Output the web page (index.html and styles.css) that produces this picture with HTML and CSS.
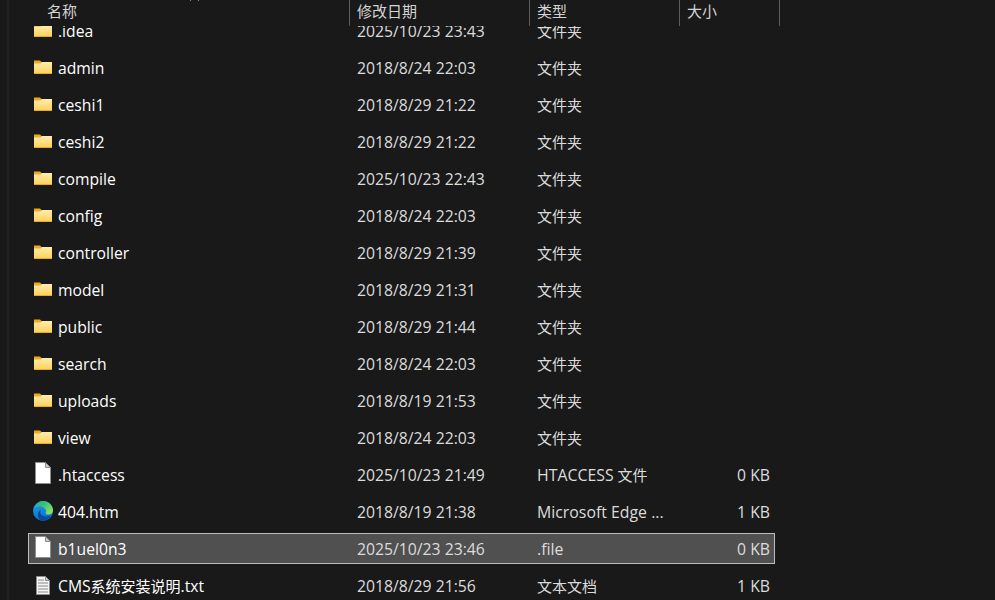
FILE: index.html
```html
<!DOCTYPE html>
<html lang="zh-CN">
<head>
<meta charset="utf-8">
<title>文件列表</title>
<link rel="stylesheet" href="styles.css">
</head>
<body>
<svg class="defs" width="0" height="0" aria-hidden="true">
  <defs>
    <linearGradient id="fg" x1="0" y1="0" x2="0" y2="1"><stop offset="0" stop-color="#ffeeb0"/><stop offset="1" stop-color="#fcd25e"/></linearGradient>
    <linearGradient id="eg" x1="0" y1="0" x2="1" y2="0.600"><stop offset="0" stop-color="#2aa8a8"/><stop offset="0.500" stop-color="#35c27a"/><stop offset="1" stop-color="#8ae05e"/></linearGradient>
    <linearGradient id="eb" x1="0" y1="0" x2="0.300" y2="1"><stop offset="0" stop-color="#1fa0e6"/><stop offset="1" stop-color="#0c6fce"/></linearGradient>
    <symbol id="folder" viewBox="0 0 20 20">
      <path d="M1 3.500h6l2 2h10V17H1z" fill="#f2a81c"/>
      <path d="M1 6.500h6.500l1.500-1.500h10v11H1z" fill="url(#fg)"/>
      <path d="M1 16h18v1H1z" fill="#eeaa22"/>
    </symbol>
    <symbol id="file" viewBox="0 0 20 24">
      <path d="M2.500 1.500h10l5 5v16h-15z" fill="#fff" stroke="#8d8d8d" stroke-width="1"/>
      <path d="M12.500 1.500v5h5z" fill="#c9c9c9" stroke="#8d8d8d" stroke-width="1"/>
    </symbol>
    <symbol id="txt" viewBox="0 0 20 21">
      <path d="M3.500 1.500h9l4 4v14h-13z" fill="#f4f4f4" stroke="#8d8d8d" stroke-width="1"/>
      <path d="M12.500 1.500v4h4z" fill="#c9c9c9" stroke="#8d8d8d" stroke-width="1"/>
      <path d="M5 5h6M5 8h10M5 11h10M5 14h10M5 17h10" stroke="#8a8a8a" stroke-width="1.200" fill="none"/>
    </symbol>
    <symbol id="edge" viewBox="0 0 20 20">
      <circle cx="10" cy="10" r="10" fill="url(#eb)"/>
      <path d="M1.500 5.500C3.500 2 6.500 0 10 0c6 0 10 4.500 10 9.500 0 2.500-2 4-4.500 4-1.500 0-3-.5-3-1.500 1-1.500.5-4-2-5.500C7 4.500 3.500 5 1.500 7.500z" fill="url(#eg)"/>
      <path d="M17.800 14.500C16 17.500 13 19.700 10 19.900 6.800 20 4.500 17 5 13 5.300 11 6.500 9.500 8 8.800 6.800 10.500 7 13 9 14.500c2.500 1.500 6 1 8.800 0z" fill="#0b4a9a"/>
    </symbol>
  </defs>
</svg>
<div class="window">
  <div class="gutter"></div>
  <main class="pane">
    <span class="tick tick-a"></span>
    <span class="tick tick-b"></span>
    <header class="head">
      <div class="hcell hname">名称</div>
      <div class="hcell hdate">修改日期</div>
      <div class="hcell htype">类型</div>
      <div class="hcell hsize">大小</div>
    </header>
    <ul class="list">
      <li class="row"><svg class="ico ico-folder"><use href="#folder"/></svg><span class="name">.idea</span><span class="date">2025/10/23 23:43</span><span class="type">文件夹</span><span class="size"></span></li>
      <li class="row"><svg class="ico ico-folder"><use href="#folder"/></svg><span class="name">admin</span><span class="date">2018/8/24 22:03</span><span class="type">文件夹</span><span class="size"></span></li>
      <li class="row"><svg class="ico ico-folder"><use href="#folder"/></svg><span class="name">ceshi1</span><span class="date">2018/8/29 21:22</span><span class="type">文件夹</span><span class="size"></span></li>
      <li class="row"><svg class="ico ico-folder"><use href="#folder"/></svg><span class="name">ceshi2</span><span class="date">2018/8/29 21:22</span><span class="type">文件夹</span><span class="size"></span></li>
      <li class="row"><svg class="ico ico-folder"><use href="#folder"/></svg><span class="name">compile</span><span class="date">2025/10/23 22:43</span><span class="type">文件夹</span><span class="size"></span></li>
      <li class="row"><svg class="ico ico-folder"><use href="#folder"/></svg><span class="name">config</span><span class="date">2018/8/24 22:03</span><span class="type">文件夹</span><span class="size"></span></li>
      <li class="row"><svg class="ico ico-folder"><use href="#folder"/></svg><span class="name">controller</span><span class="date">2018/8/29 21:39</span><span class="type">文件夹</span><span class="size"></span></li>
      <li class="row"><svg class="ico ico-folder"><use href="#folder"/></svg><span class="name">model</span><span class="date">2018/8/29 21:31</span><span class="type">文件夹</span><span class="size"></span></li>
      <li class="row"><svg class="ico ico-folder"><use href="#folder"/></svg><span class="name">public</span><span class="date">2018/8/29 21:44</span><span class="type">文件夹</span><span class="size"></span></li>
      <li class="row"><svg class="ico ico-folder"><use href="#folder"/></svg><span class="name">search</span><span class="date">2018/8/24 22:03</span><span class="type">文件夹</span><span class="size"></span></li>
      <li class="row"><svg class="ico ico-folder"><use href="#folder"/></svg><span class="name">uploads</span><span class="date">2018/8/19 21:53</span><span class="type">文件夹</span><span class="size"></span></li>
      <li class="row"><svg class="ico ico-folder"><use href="#folder"/></svg><span class="name">view</span><span class="date">2018/8/24 22:03</span><span class="type">文件夹</span><span class="size"></span></li>
      <li class="row"><svg class="ico ico-file"><use href="#file"/></svg><span class="name">.htaccess</span><span class="date">2025/10/23 21:49</span><span class="type"><span class="latin">HTACCESS</span> 文件</span><span class="size">0 KB</span></li>
      <li class="row"><svg class="ico ico-edge"><use href="#edge"/></svg><span class="name">404.htm</span><span class="date">2018/8/19 21:38</span><span class="type"><span class="latin">Microsoft Edge ...</span></span><span class="size">1 KB</span></li>
      <li class="row selected"><svg class="ico ico-file"><use href="#file"/></svg><span class="name">b1uel0n3</span><span class="date">2025/10/23 23:46</span><span class="type"><span class="latin">.file</span></span><span class="size">0 KB</span></li>
      <li class="row"><svg class="ico ico-txt"><use href="#txt"/></svg><span class="name">CMS<span class="cjk">系统安装说明</span>.txt</span><span class="date">2018/8/29 21:56</span><span class="type">文本文档</span><span class="size">1 KB</span></li>
    </ul>
  </main>
</div>
</body>
</html>
```

FILE: styles.css
```css
* { box-sizing: border-box; }
html, body { margin: 0; padding: 0; height: 100%; }
body {
  background: #191919;
  color: #fff;
  font-family: "Open Sans", "Noto Sans CJK SC", sans-serif;
  font-size: 15px;
  overflow: hidden;
}
.defs { position: absolute; }
.window { display: flex; height: 600px; overflow: hidden; }
.gutter { width: 9px; flex: none; border-right: 2px solid #222; }
.pane { position: relative; flex: 1; min-width: 0; }
.tick { position: absolute; top: 0; width: 1px; height: 1px; background: #8a8a8a; z-index: 3; }
.tick-a { left: 181px; }
.tick-b { left: 189px; }

.head {
  position: relative;
  z-index: 2;
  display: flex;
  width: 771px;
  height: 26px;
  margin-bottom: -11px;
  background: #191919;
  color: #d4d4d4;
  font-size: 15px;
}
.hcell { padding: 0 0 0 7px; line-height: 22px; border-right: 1px solid #5d5d5d; }
.hname { width: 341px; padding-left: 38px; }
.hdate { width: 180px; }
.htype { width: 150px; }
.hsize { width: 100px; }

.list { list-style: none; margin: 0; padding: 0; display: flex; flex-direction: column; gap: 6px; }
.row {
  display: flex;
  align-items: center;
  flex: none;
  width: 747px;
  height: 31px;
  margin-left: 19px;
  border: 1px solid transparent;
  white-space: nowrap;
  position: relative;
}
.row.selected { background: #505050; border-color: #bdbdbd; }
.ico { flex: none; display: block; }
.ico-folder { width: 20px; height: 20px; margin: -1px 5px 0 4px; }
.ico-file { width: 20px; height: 24px; margin: -3px 5px 0 4px; }
.ico-txt { width: 20px; height: 21px; margin: 0 5px 0 4px; }
.ico-edge { width: 20px; height: 20px; margin: -2px 5px 0 4px; }
.name { width: 299px; font-size: 15.7px; }
.date { width: 180px; color: #dcdcdc; font-size: 15.75px; }
.type { width: 150px; color: #dcdcdc; }
.latin { font-size: 15.85px; }
.cjk { font-size: 15px; }
.size { width: 83px; text-align: right; color: #dcdcdc; font-size: 15.75px; }
```
